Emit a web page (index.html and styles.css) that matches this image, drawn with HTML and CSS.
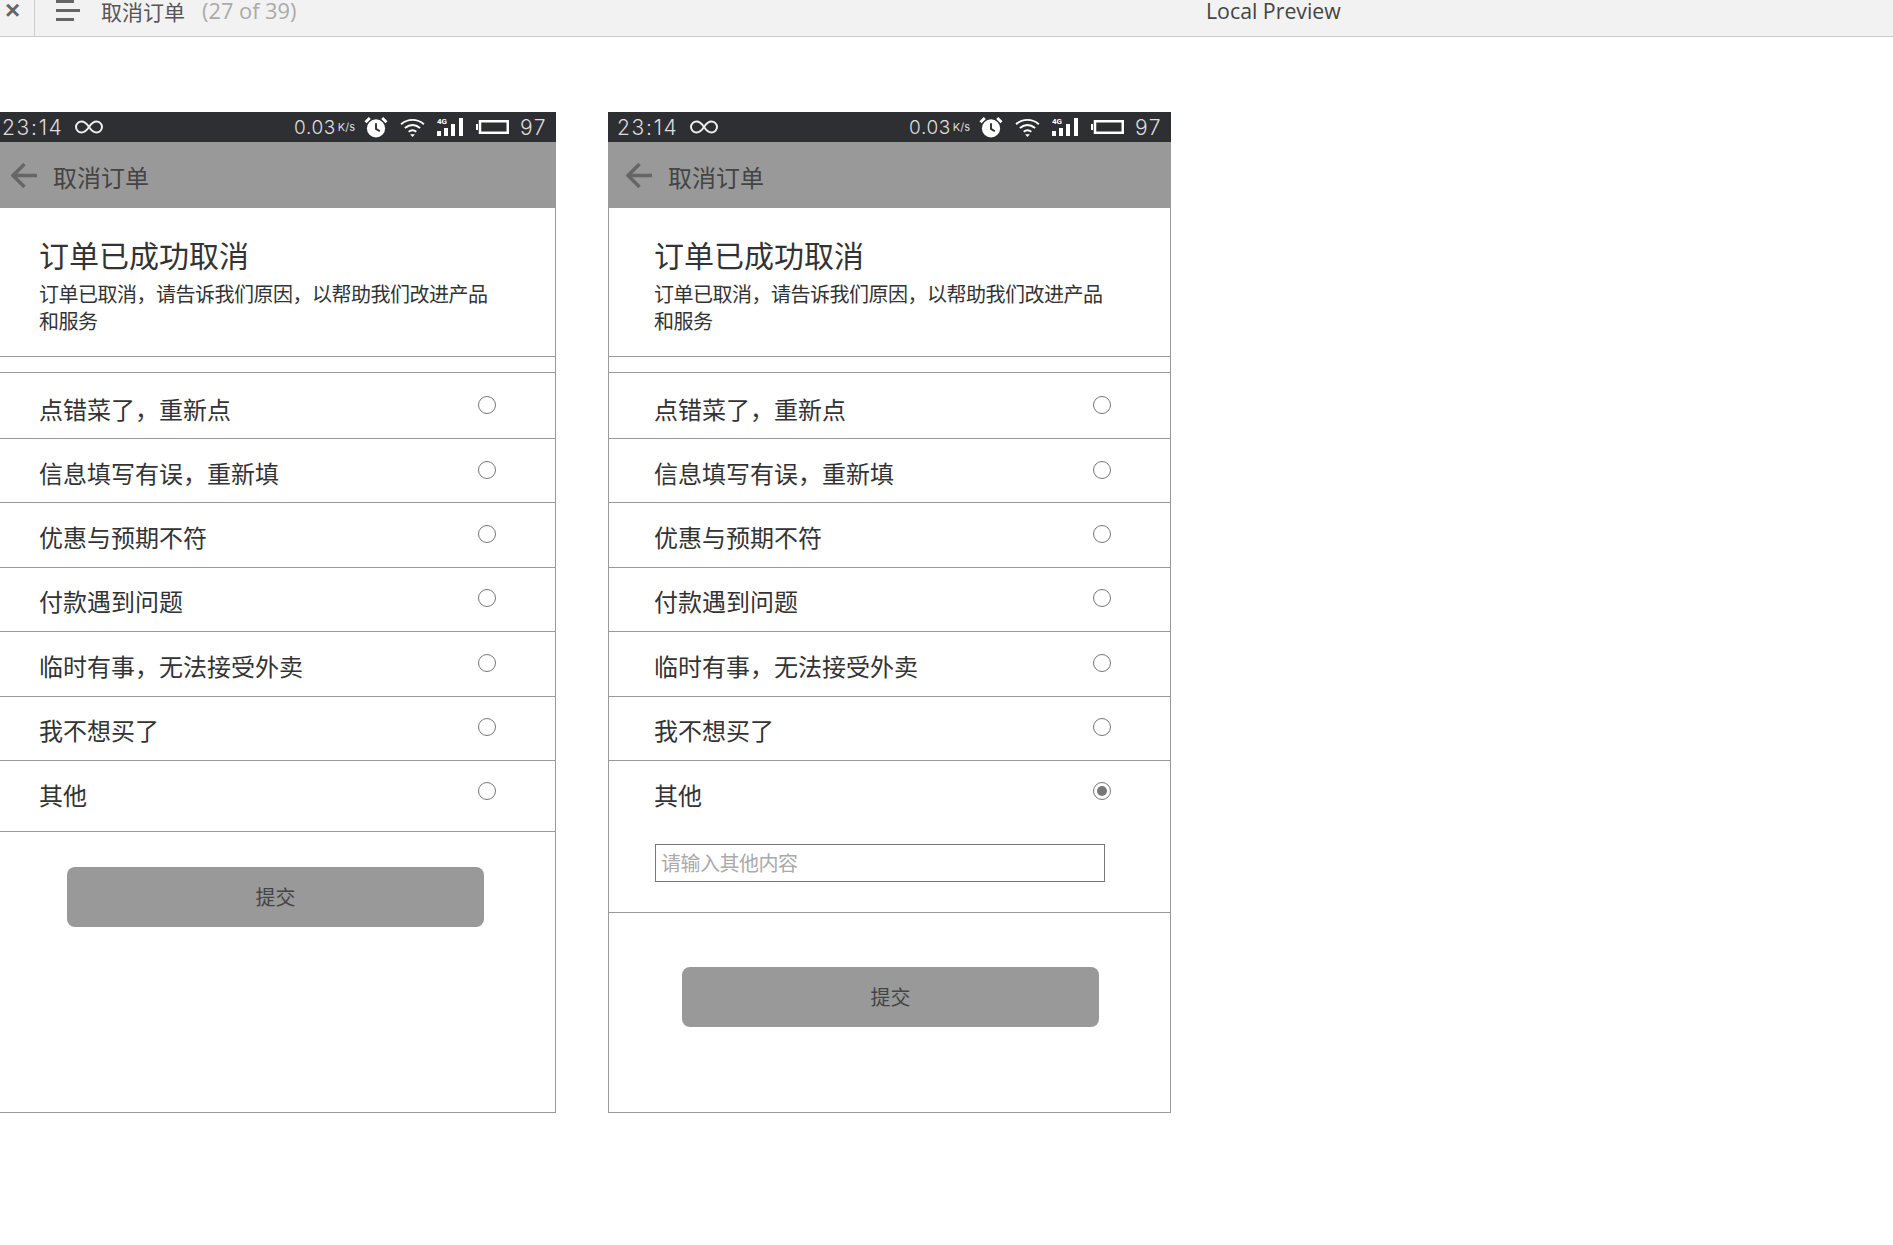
FILE: index.html
```html
<!DOCTYPE html>
<html lang="en">
<head>
    <meta charset="UTF-8">
    <title>取消订单</title>
    <link rel="stylesheet" href="styles.css">
</head>
<body>
<svg class="sprite" width="0" height="0">
    <symbol id="i-loop" viewBox="0 0 30 14">
        <path d="M15 7C12 2.5 10 1.500 7.500 1.500a5.500 5.500 0 0 0 0 11C10 12.500 12 11.500 15 7c3-4.500 5-5.500 7.500-5.500a5.500 5.500 0 0 1 0 11C20 12.500 18 11.500 15 7z" fill="none" stroke="#eee" stroke-width="2"/>
    </symbol>
    <symbol id="i-clock" viewBox="0 0 25 23">
        <circle cx="12.500" cy="13" r="9.500" fill="#fff"/>
        <path d="M1.500 6.500 6 2M23.500 6.500 19 2" stroke="#fff" stroke-width="3"/>
        <path d="M12.500 7.500V13.500l4 2.500" fill="none" stroke="#2e2f33" stroke-width="2"/>
    </symbol>
    <symbol id="i-wifi" viewBox="0 0 26 20">
        <path d="M1 6.500C8 .5 18 .5 25 6.500M5 10.500c5-4 11-4 16 0M9 14.500c2.500-2 5.500-2 8 0" fill="none" stroke="#fff" stroke-width="2"/>
        <path d="M10.500 17h5L13 20z" fill="#fff"/>
    </symbol>
    <symbol id="i-signal" viewBox="0 0 28 20">
        <text x="0" y="7" font-family="Roboto, sans-serif" font-size="8" font-weight="700" fill="#fff">4G</text>
        <path d="M0 14h4v5H0zM7 11h4v8H7zM14 7h4v12h-4zM22 1h4v18h-4z" fill="#fff"/>
    </symbol>
    <symbol id="i-battery" viewBox="0 0 33 14">
        <path d="M0 4h2v6H0z" fill="#fff"/>
        <rect x="4" y="1.250" width="27.750" height="11.500" fill="#2e2f33" stroke="#fff" stroke-width="2.500"/>
    </symbol>
    <symbol id="i-back" viewBox="0 0 26 25">
        <path d="M26 12.500H2M13.500 1 2 12.500 13.500 24" fill="none" stroke="#666" stroke-width="3.500"/>
    </symbol>
</svg>

<div class="topbar">
    <span class="close">×</span>
    <span class="menu"><i></i><i></i><i></i></span>
    <span class="doc-title">取消订单</span>
    <span class="doc-count">(27 of 39)</span>
    <span class="preview">Local Preview</span>
</div>

<div class="screens">
    <div class="phone">
        <div class="statusbar">
            <span class="clock-time">23:14</span>
            <svg class="ic-loop"><use href="#i-loop"/></svg>
            <span class="status-right">
                <span class="speed">0.03</span><span class="unit">K/s</span>
                <svg class="ic-clock"><use href="#i-clock"/></svg>
                <svg class="ic-wifi"><use href="#i-wifi"/></svg>
                <svg class="ic-signal"><use href="#i-signal"/></svg>
                <svg class="ic-battery"><use href="#i-battery"/></svg>
                <span class="level">97</span>
            </span>
        </div>
        <div class="navbar">
            <svg class="ic-back"><use href="#i-back"/></svg>
            <span>取消订单</span>
        </div>
        <div class="intro">
            <h1>订单已成功取消</h1>
            <p>订单已取消&#xFF0C;请告诉我们原因&#xFF0C;以帮助我们改进产品和服务</p>
        </div>
        <ul class="reasons">
            <li class="first"><span>点错菜了&#xFF0C;重新点</span><i class="radio"></i></li>
            <li><span>信息填写有误&#xFF0C;重新填</span><i class="radio"></i></li>
            <li><span>优惠与预期不符</span><i class="radio"></i></li>
            <li><span>付款遇到问题</span><i class="radio"></i></li>
            <li><span>临时有事&#xFF0C;无法接受外卖</span><i class="radio"></i></li>
            <li><span>我不想买了</span><i class="radio"></i></li>
            <li class="last"><span>其他</span><i class="radio"></i></li>
        </ul>
        <button class="submit">提交</button>
    </div>

    <div class="phone">
        <div class="statusbar">
            <span class="clock-time">23:14</span>
            <svg class="ic-loop"><use href="#i-loop"/></svg>
            <span class="status-right">
                <span class="speed">0.03</span><span class="unit">K/s</span>
                <svg class="ic-clock"><use href="#i-clock"/></svg>
                <svg class="ic-wifi"><use href="#i-wifi"/></svg>
                <svg class="ic-signal"><use href="#i-signal"/></svg>
                <svg class="ic-battery"><use href="#i-battery"/></svg>
                <span class="level">97</span>
            </span>
        </div>
        <div class="navbar">
            <svg class="ic-back"><use href="#i-back"/></svg>
            <span>取消订单</span>
        </div>
        <div class="intro">
            <h1>订单已成功取消</h1>
            <p>订单已取消&#xFF0C;请告诉我们原因&#xFF0C;以帮助我们改进产品和服务</p>
        </div>
        <ul class="reasons">
            <li class="first"><span>点错菜了&#xFF0C;重新点</span><i class="radio"></i></li>
            <li><span>信息填写有误&#xFF0C;重新填</span><i class="radio"></i></li>
            <li><span>优惠与预期不符</span><i class="radio"></i></li>
            <li><span>付款遇到问题</span><i class="radio"></i></li>
            <li><span>临时有事&#xFF0C;无法接受外卖</span><i class="radio"></i></li>
            <li><span>我不想买了</span><i class="radio"></i></li>
            <li class="open">
                <span>其他</span><i class="radio on"></i>
                <input class="other" type="text" placeholder="请输入其他内容">
            </li>
        </ul>
        <button class="submit later">提交</button>
    </div>
</div>
</body>
</html>
```

FILE: styles.css
```css
* {
    box-sizing: border-box;
    margin: 0;
    padding: 0;
}

html, body {
    height: 100%;
    overflow: hidden;
}

body {
    background-color: #fff;
    font-family: "Noto Sans CJK SC", "Noto Sans", sans-serif;
    color: #333;
}

.sprite {
    position: absolute;
}

/* preview toolbar */
.topbar {
    position: relative;
    display: flex;
    align-items: flex-start;
    height: 37px;
    background-color: #f2f2f2;
    border-bottom: 1px solid #ccc;
    overflow: hidden;
}

.close {
    width: 35px;
    height: 36px;
    border-right: 1px solid #ccc;
    padding-left: 5px;
    font: bold 26px/20px "Liberation Sans", sans-serif;
    color: #666;
}

.menu {
    display: flex;
    flex-direction: column;
    gap: 6px;
    width: 24px;
    margin-left: 21px;
}

.menu i {
    display: block;
    width: 18px;
    height: 3px;
    background-color: #666;
}

.menu i:nth-child(2) {
    width: 24px;
}

.doc-title {
    margin-left: 21px;
    font-size: 21px;
    line-height: 22px;
    color: #555;
}

.doc-count {
    margin-left: 17px;
    font: 21.800px/22px "Open Sans", sans-serif;
    color: #aaa;
}

.preview {
    position: absolute;
    left: 1206px;
    top: 0;
    font: 21.300px/22px "Open Sans", sans-serif;
    color: #444;
}

/* phones */
.screens {
    display: flex;
    gap: 52px;
    margin: 75px 0 0 -7px;
}

.phone {
    width: 563px;
    height: 1001px;
    flex: none;
    border: 1px solid #999;
    border-top: 0;
}

.statusbar {
    display: flex;
    align-items: center;
    height: 30px;
    margin: 0 -1px;
    padding: 0 9px;
    background-color: #2e2f33;
    color: #ddd;
    font-family: Inter, sans-serif;
    font-weight: 300;
    font-size: 21px;
}

.clock-time {
    letter-spacing: 1.700px;
}

.ic-loop {
    width: 30px;
    height: 14px;
    margin-left: 10px;
}

.status-right {
    display: flex;
    align-items: center;
    margin-left: auto;
}

.speed {
    font-size: 19px;
    letter-spacing: .6px;
}

.unit {
    margin-left: 2px;
    font-size: 11px;
    font-weight: 400;
}

.ic-clock {
    width: 24px;
    height: 22px;
    margin-left: 9px;
}

.ic-wifi {
    width: 25px;
    height: 19px;
    margin-left: 12px;
}

.ic-signal {
    width: 28px;
    height: 20px;
    margin-left: 12px;
}

.ic-battery {
    width: 33px;
    height: 14px;
    margin-left: 11px;
}

.level {
    margin-left: 11px;
    letter-spacing: 1.500px;
}

.navbar {
    display: flex;
    align-items: center;
    height: 66px;
    margin: 0 -1px;
    padding: 0 0 0 18px;
    background-color: #999;
    font-size: 24px;
    color: #444;
}

.navbar span {
    margin-top: 3px;
}

.ic-back {
    width: 26px;
    height: 25px;
    margin: 0 16px 0 0;
}

.intro {
    height: 149px;
    padding: 26px 60px 0 45px;
    border-bottom: 1px solid #999;
}

.intro h1 {
    font-size: 30px;
    font-weight: 400;
    line-height: 40px;
}

.intro p {
    margin-top: 6px;
    font-size: 20px;
    line-height: 27px;
    letter-spacing: -.5px;
}

.reasons {
    list-style: none;
    margin-top: 15px;
    border-top: 1px solid #999;
}

.reasons li {
    position: relative;
    height: 64.4px;
    padding: 15.500px 0 0 45px;
    border-bottom: 1px solid #999;
    font-size: 24px;
    line-height: 36px;
}

.reasons li.first {
    height: 66px;
    padding-top: 17.500px;
}

.reasons li.last {
    height: 71px;
    padding-top: 16.500px;
}

.reasons li.open {
    height: 152px;
    padding-top: 16.500px;
}

.radio {
    position: absolute;
    top: 21.500px;
    right: 59px;
    width: 18px;
    height: 18px;
    border: 1.5px solid #777;
    border-radius: 50%;
    background-color: #fff;
}

.first .radio {
    top: 23px;
}

.radio.on::after {
    content: "";
    display: block;
    width: 10px;
    height: 10px;
    margin: 2.500px;
    border-radius: 50%;
    background-color: #777;
}

.other {
    display: block;
    width: 450px;
    height: 38px;
    margin: 30.500px 0 0 1px;
    padding-left: 5px;
    border: 1px solid #777;
    font-family: inherit;
    font-size: 20px;
    letter-spacing: -.5px;
    outline: 0;
}

.other::placeholder {
    color: #aaa;
}

.submit {
    display: block;
    width: 417px;
    height: 60px;
    margin: 35px 0 0 73px;
    border: 0;
    border-radius: 8px;
    background-color: #999;
    font-family: inherit;
    font-size: 20px;
    color: #444;
}

.submit.later {
    margin-top: 54px;
}
```
